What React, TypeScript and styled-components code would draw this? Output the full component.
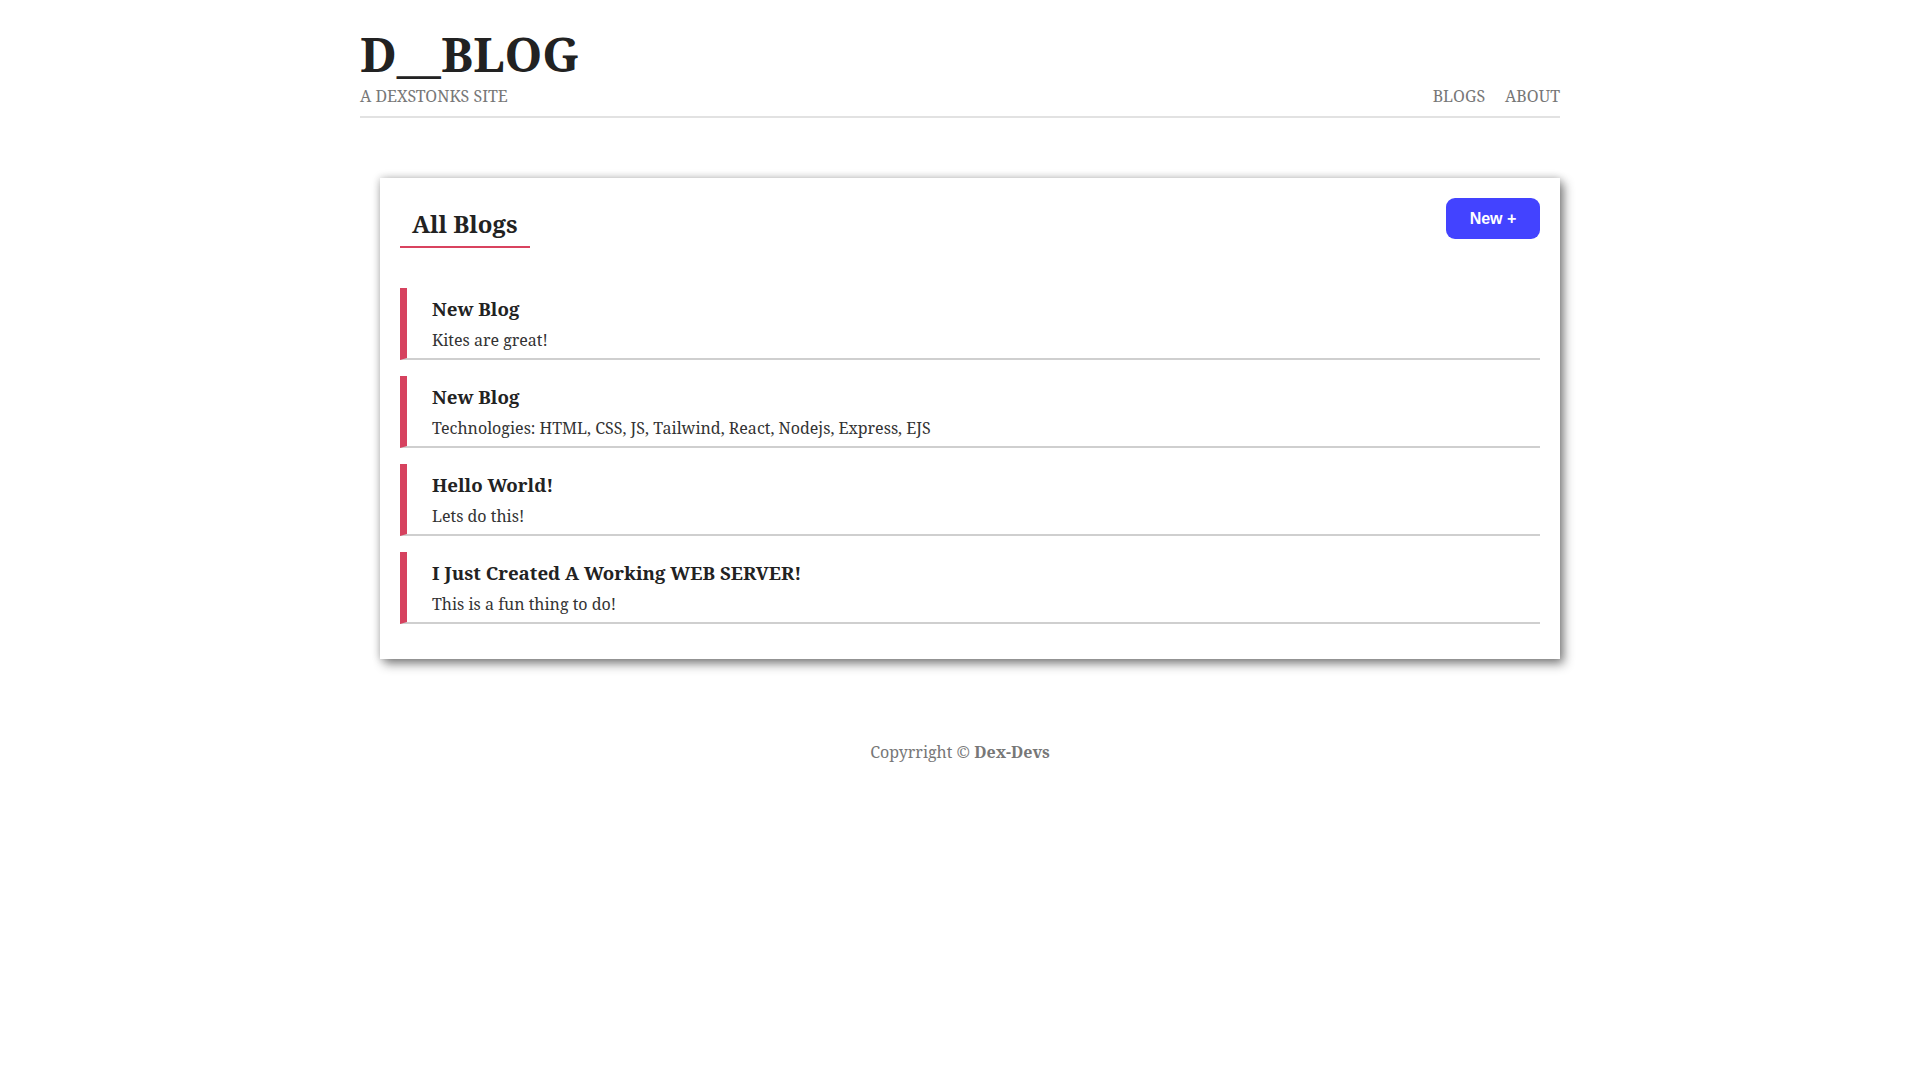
import React from 'react';
import styled, { createGlobalStyle } from 'styled-components';

interface Blog {
  id: number;
  title: string;
  snippet: string;
}

const blogs: Array<Blog> = [
  { id: 1, title: 'New Blog', snippet: 'Kites are great!' },
  { id: 2, title: 'New Blog', snippet: 'Technologies: HTML, CSS, JS, Tailwind, React, Nodejs, Express, EJS' },
  { id: 3, title: 'Hello World!', snippet: 'Lets do this!' },
  { id: 4, title: 'I Just Created A Working WEB SERVER!', snippet: 'This is a fun thing to do!' },
];

const GlobalStyle = createGlobalStyle`
  body {
    margin: 0;
    background: #fff;
    font-family: "Noto Serif", "DejaVu Serif", "Liberation Serif", serif;
    color: #333;
  }
`;

const Page = styled.div`
  margin: 0 auto;
  width: 1200px;
`;

const Header = styled.header`
  align-items: flex-end;
  border-bottom: 2px solid #e2e2e2;
  display: flex;
  justify-content: space-between;
  padding: 26px 0 10px;
`;

const Brand = styled.div`
  display: flex;
  flex-direction: column;
`;

const Logo = styled.h1`
  color: #222;
  font-size: 48px;
  font-weight: 700;
  line-height: 56px;
  margin: 0;
`;

const Tagline = styled.p`
  color: #777;
  font-size: 16px;
  line-height: 20px;
  margin: 4px 0 0;
`;

const Nav = styled.nav`
  display: flex;
  gap: 20px;
`;

const NavLink = styled.a`
  color: #777;
  font-size: 16px;
  line-height: 20px;
  text-decoration: none;
`;

const Card = styled.main`
  background: #fff;
  box-shadow: 0 0 8px rgba(0, 0, 0, 0.22), 4px 5px 10px rgba(0, 0, 0, 0.45);
  margin: 60px 0 0 20px;
  padding: 20px 20px 35px;
`;

const CardHead = styled.div`
  align-items: flex-start;
  display: flex;
  justify-content: space-between;
  margin-bottom: 40px;
`;

const Heading = styled.h2`
  border-bottom: 2px solid #d9435f;
  color: #222;
  font-size: 24px;
  font-weight: 700;
  line-height: 32px;
  margin: 0;
  padding: 10px 12px 6px;
`;

const NewButton = styled.button`
  background: #4343ff;
  border: 0;
  border-radius: 9px;
  color: #fff;
  cursor: pointer;
  font-family: "Liberation Sans", Arial, sans-serif;
  font-size: 16px;
  font-weight: 600;
  height: 41px;
  padding: 0;
  width: 94px;
`;

const List = styled.div`
  display: flex;
  flex-direction: column;
  gap: 16px;
`;

const Item = styled.article`
  border-bottom: 2px solid #cfcfcf;
  border-left: 7px solid #d6425f;
  padding: 8px 24px 6px 25px;
`;

const ItemTitle = styled.h3`
  color: #222;
  font-size: 18.7px;
  font-weight: 700;
  line-height: 26px;
  margin: 0;
`;

const ItemText = styled.p`
  color: #333;
  font-size: 16px;
  line-height: 24px;
  margin: 6px 0 0;
`;

const Footer = styled.footer`
  color: #777;
  font-size: 16px;
  line-height: 22px;
  padding-top: 82px;
  text-align: center;
`;

const App: React.FC = () => (
  <>
    <GlobalStyle />
    <Page>
      <Header>
        <Brand>
          <Logo>D__BLOG</Logo>
          <Tagline>A DEXSTONKS SITE</Tagline>
        </Brand>
        <Nav>
          <NavLink href="#">BLOGS</NavLink>
          <NavLink href="#">ABOUT</NavLink>
        </Nav>
      </Header>

      <Card>
        <CardHead>
          <Heading>All Blogs</Heading>
          <NewButton>New +</NewButton>
        </CardHead>
        <List>
          {blogs.map((blog) => (
            <Item key={blog.id}>
              <ItemTitle>{blog.title}</ItemTitle>
              <ItemText>{blog.snippet}</ItemText>
            </Item>
          ))}
        </List>
      </Card>

      <Footer>
        Copyrright © <b>Dex-Devs</b>
      </Footer>
    </Page>
  </>
);

export default App;
